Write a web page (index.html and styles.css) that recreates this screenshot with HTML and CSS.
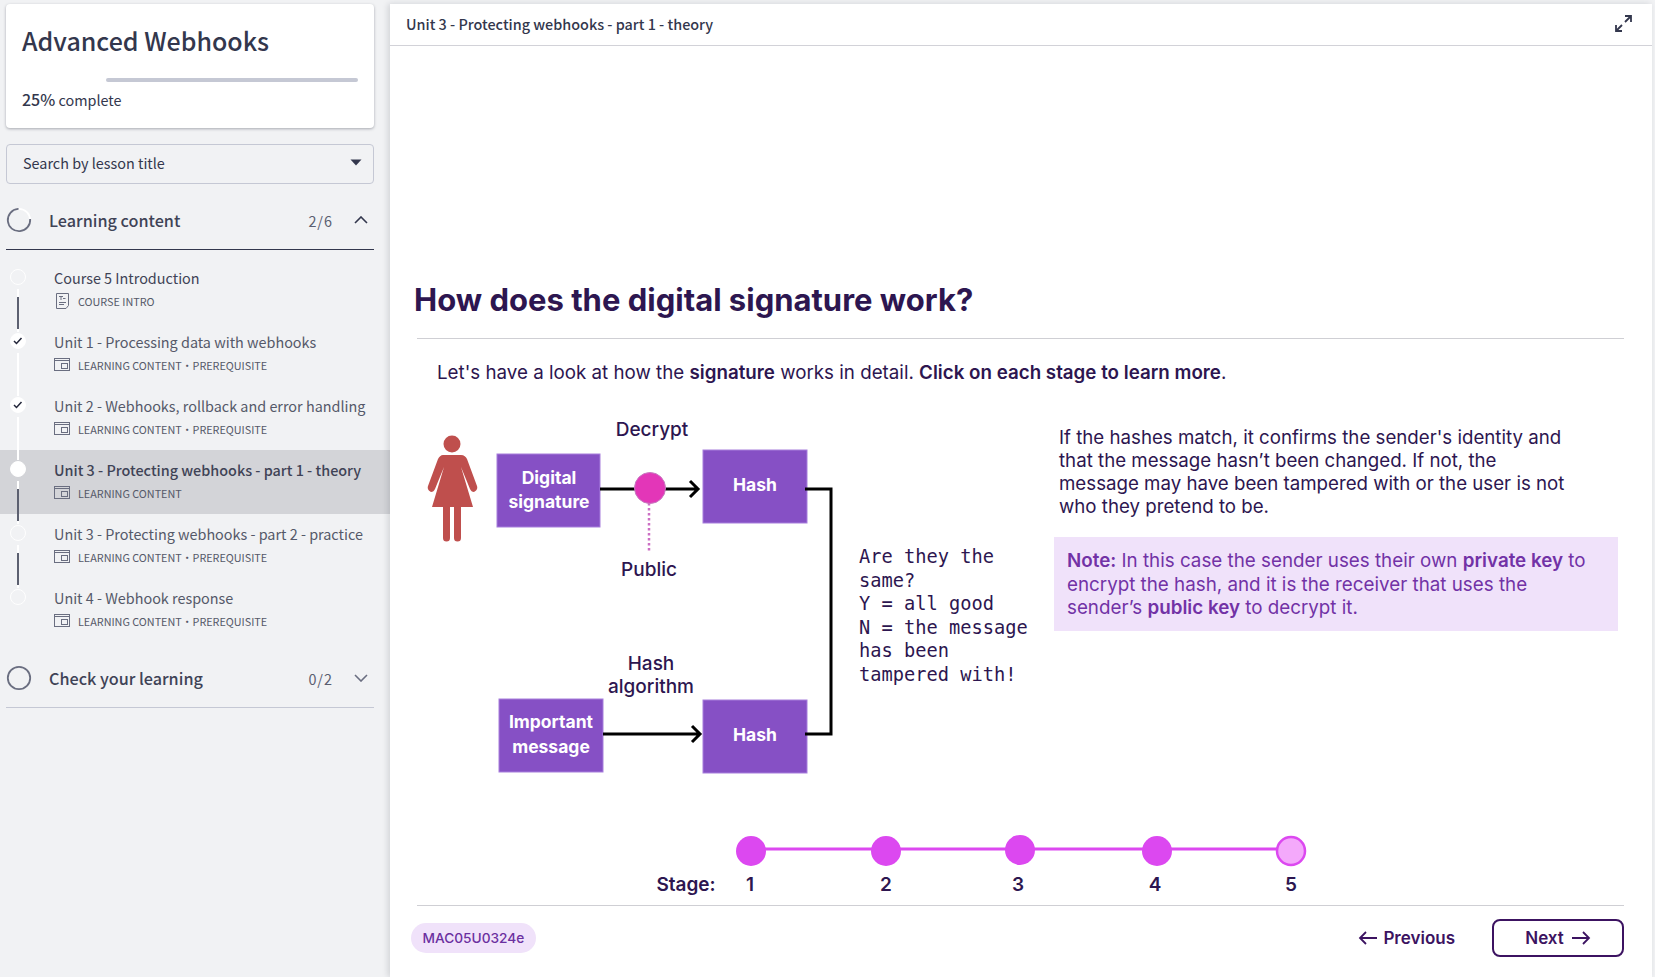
FILE: index.html
```html
<!DOCTYPE html>
<html lang="en">

<head>
    <meta charset="UTF-8">
    <title>Advanced Webhooks</title>
    <link rel="stylesheet" href="styles.css">
</head>

<body>
    <aside class="sidebar">
        <div class="course-card">
            <h1 class="course-title">Advanced Webhooks</h1>
            <div class="progress"><div class="progress-done"></div><div class="progress-left"></div></div>
            <p class="progress-text"><b>25%</b> complete</p>
        </div>

        <div class="search">
            <span>Search by lesson title</span>
            <svg width="12" height="7" viewBox="0 0 12 7"><path d="M0.5 0.5h11L6 6.5z" fill="#33374d"/></svg>
        </div>

        <div class="section section-open">
            <svg class="section-ring" width="26" height="26" viewBox="0 0 26 26">
                <circle cx="13" cy="13" r="11.2" fill="none" stroke="#fff" stroke-width="1.8"/>
                <circle cx="13" cy="13" r="11.2" fill="none" stroke="#6a6e80" stroke-width="1.8" stroke-dasharray="53 18" transform="rotate(-5 13 13)"/>
            </svg>
            <span class="section-title">Learning content</span>
            <span class="section-count">2/6</span>
            <svg class="chevron" width="14" height="8" viewBox="0 0 14 8"><path d="M1 7l6-6 6 6" fill="none" stroke="#33374d" stroke-width="1.6"/></svg>
        </div>

        <ul class="lessons">
            <li class="lesson">
                <div class="marker"><span class="dot"></span><span class="rail rail-todo"></span></div>
                <div class="lesson-body">
                    <div class="lesson-title lesson-title-dark">Course 5 Introduction</div>
                    <div class="lesson-meta">
                        <svg class="meta-icon" width="16" height="16" viewBox="0 0 16 16" fill="none" stroke="#6a6e80"><path d="M2.5 0.5h12v12l-2.500 3h-9.500z"/><path d="M5 3.500h4M7 3.500v3.500M9 5.500h2.500M5 9.500h7M5 11.500h5"/></svg>
                        <span>COURSE INTRO</span>
                    </div>
                </div>
            </li>
            <li class="lesson">
                <div class="marker">
                    <span class="dot"><svg width="10" height="8" viewBox="0 0 10 8"><path d="M1 4l2.500 2.500L8.500 1" fill="none" stroke="#23263a" stroke-width="1.500"/></svg></span>
                    <span class="rail"></span>
                </div>
                <div class="lesson-body">
                    <div class="lesson-title">Unit 1 - Processing data with webhooks</div>
                    <div class="lesson-meta">
                        <svg class="meta-icon" width="16" height="14" viewBox="0 0 16 14" fill="none" stroke="#6a6e80"><rect x="0.500" y="0.500" width="15" height="12"/><path d="M0.500 2.500h15"/><rect x="7.500" y="5.500" width="6" height="5"/></svg>
                        <span>LEARNING CONTENT</span><span class="meta-sep">·</span><span>PREREQUISITE</span>
                    </div>
                </div>
            </li>
            <li class="lesson">
                <div class="marker">
                    <span class="dot"><svg width="10" height="8" viewBox="0 0 10 8"><path d="M1 4l2.500 2.500L8.500 1" fill="none" stroke="#23263a" stroke-width="1.500"/></svg></span>
                    <span class="rail"></span>
                </div>
                <div class="lesson-body">
                    <div class="lesson-title">Unit 2 - Webhooks, rollback and error handling</div>
                    <div class="lesson-meta">
                        <svg class="meta-icon" width="16" height="14" viewBox="0 0 16 14" fill="none" stroke="#6a6e80"><rect x="0.500" y="0.500" width="15" height="12"/><path d="M0.500 2.500h15"/><rect x="7.500" y="5.500" width="6" height="5"/></svg>
                        <span>LEARNING CONTENT</span><span class="meta-sep">·</span><span>PREREQUISITE</span>
                    </div>
                </div>
            </li>
            <li class="lesson lesson-current">
                <div class="marker"><span class="dot"></span><span class="rail rail-todo"></span></div>
                <div class="lesson-body">
                    <div class="lesson-title">Unit 3 - Protecting webhooks - part 1 - theory</div>
                    <div class="lesson-meta">
                        <svg class="meta-icon" width="16" height="14" viewBox="0 0 16 14" fill="none" stroke="#6a6e80"><rect x="0.500" y="0.500" width="15" height="12"/><path d="M0.500 2.500h15"/><rect x="7.500" y="5.500" width="6" height="5"/></svg>
                        <span>LEARNING CONTENT</span>
                    </div>
                </div>
            </li>
            <li class="lesson">
                <div class="marker"><span class="dot"></span><span class="rail rail-todo"></span></div>
                <div class="lesson-body">
                    <div class="lesson-title">Unit 3 - Protecting webhooks - part 2 - practice</div>
                    <div class="lesson-meta">
                        <svg class="meta-icon" width="16" height="14" viewBox="0 0 16 14" fill="none" stroke="#6a6e80"><rect x="0.500" y="0.500" width="15" height="12"/><path d="M0.500 2.500h15"/><rect x="7.500" y="5.500" width="6" height="5"/></svg>
                        <span>LEARNING CONTENT</span><span class="meta-sep">·</span><span>PREREQUISITE</span>
                    </div>
                </div>
            </li>
            <li class="lesson">
                <div class="marker"><span class="dot"></span></div>
                <div class="lesson-body">
                    <div class="lesson-title">Unit 4 - Webhook response</div>
                    <div class="lesson-meta">
                        <svg class="meta-icon" width="16" height="14" viewBox="0 0 16 14" fill="none" stroke="#6a6e80"><rect x="0.500" y="0.500" width="15" height="12"/><path d="M0.500 2.500h15"/><rect x="7.500" y="5.500" width="6" height="5"/></svg>
                        <span>LEARNING CONTENT</span><span class="meta-sep">·</span><span>PREREQUISITE</span>
                    </div>
                </div>
            </li>
        </ul>

        <div class="section section-closed">
            <svg class="section-ring" width="26" height="26" viewBox="0 0 26 26"><circle cx="13" cy="13" r="11.200" fill="none" stroke="#6a6e80" stroke-width="1.800"/></svg>
            <span class="section-title">Check your learning</span>
            <span class="section-count">0/2</span>
            <svg class="chevron" width="14" height="8" viewBox="0 0 14 8"><path d="M1 1l6 6 6-6" fill="none" stroke="#6a6e80" stroke-width="1.600"/></svg>
        </div>
    </aside>

    <main class="main">
        <header class="main-header">
            <span>Unit 3 - Protecting webhooks - part 1 - theory</span>
            <svg width="17" height="17" viewBox="0 0 17 17" fill="none" stroke="#33374d" stroke-width="1.800"><path d="M10 1h6v6M16 1l-6 6M7 16H1v-6M1 16l6-6"/></svg>
        </header>

        <section class="slide">
            <h2 class="slide-title">How does the digital signature work?</h2>
            <p class="slide-intro">Let's have a look at how the <b>signature</b> works in detail. <b>Click on each stage to learn more</b>.</p>

            <div class="figure">
                <svg class="diagram" width="430" height="390" viewBox="417 400 430 390">
                    <circle cx="452" cy="444" r="8.500" fill="#bf4f4d"/>
                    <path d="M443 455h18c3 0 5 2 6 4l10 27c1 3-1 5-3 6-2 0-3-1-4-3l-9-22 12 40h-41l12-40-9 22c-1 2-2 3-4 3-2-1-4-3-3-6l10-27c1-2 3-4 5-4z" fill="#bf4f4d"/>
                    <path d="M443 506h7v32a3.500 3.500 0 0 1-7 0zM454 506h7v32a3.500 3.500 0 0 1-7 0z" fill="#bf4f4d"/>

                    <rect class="box" x="497" y="454" width="103" height="73"/>
                    <text class="box-text" x="549" y="484">Digital</text>
                    <text class="box-text" x="549" y="508">signature</text>
                    <rect class="box" x="703" y="450" width="104" height="73"/>
                    <text class="box-text" x="755" y="491">Hash</text>
                    <text class="label" x="652" y="436">Decrypt</text>
                    <path class="wire" d="M600 489H698M690 481l8 8-8 8"/>
                    <path d="M649 503V552" stroke="#cc6fc4" stroke-width="2.500" stroke-dasharray="2.500 2.500"/>
                    <circle cx="650" cy="488" r="15.500" fill="#e336b8" stroke="#c77ac0"/>
                    <text class="label" x="649" y="576">Public</text>

                    <text class="label" x="651" y="670">Hash</text>
                    <text class="label" x="651" y="693">algorithm</text>
                    <rect class="box" x="499" y="699" width="104" height="73"/>
                    <text class="box-text" x="551" y="728">Important</text>
                    <text class="box-text" x="551" y="753">message</text>
                    <rect class="box" x="703" y="700" width="104" height="73"/>
                    <text class="box-text" x="755" y="741">Hash</text>
                    <path class="wire" d="M603 734H700M692 726l8 8-8 8"/>
                    <path class="wire" d="M805 489H831V734H805"/>
                </svg>

                <div class="figure-question">Are they the same?<br>Y = all good<br>N = the message has been tampered with!</div>

                <div class="figure-side">
                    <p class="figure-text">If the hashes match, it confirms the sender's identity and that the message hasn’t been changed. If not, the message may have been tampered with or the user is not who they pretend to be.</p>
                    <div class="note"><b>Note:</b> In this case the sender uses their own <b>private key</b> to encrypt the hash, and it is the receiver that uses the sender’s <b>public key</b> to decrypt it.</div>
                </div>
            </div>

            <svg class="stages" width="700" height="70" viewBox="640 830 700 70">
                <path d="M751 849H1291" stroke="#dc48f0" stroke-width="3"/>
                <circle class="stage" cx="751" cy="851" r="15"/>
                <circle class="stage" cx="886" cy="851" r="15"/>
                <circle class="stage" cx="1020" cy="850" r="15"/>
                <circle class="stage" cx="1157" cy="851" r="15"/>
                <circle class="stage stage-current" cx="1291" cy="851" r="14"/>
                <text class="stage-label" x="686" y="891">Stage:</text>
                <text class="stage-label" x="750" y="891">1</text>
                <text class="stage-label" x="886" y="891">2</text>
                <text class="stage-label" x="1018" y="891">3</text>
                <text class="stage-label" x="1155" y="891">4</text>
                <text class="stage-label" x="1291" y="891">5</text>
            </svg>
        </section>

        <footer class="main-footer">
            <span class="tag">MAC05U0324e</span>
            <div class="nav">
                <a class="nav-prev">
                    <svg width="20" height="14" viewBox="0 0 20 14" fill="none" stroke="#3c1361" stroke-width="1.800"><path d="M19 7H2M8 1L2 7l6 6"/></svg>
                    Previous
                </a>
                <a class="nav-next">
                    Next
                    <svg width="20" height="14" viewBox="0 0 20 14" fill="none" stroke="#3c1361" stroke-width="1.800"><path d="M1 7h17M12 1l6 6-6 6"/></svg>
                </a>
            </div>
        </footer>
    </main>
</body>

</html>
```

FILE: styles.css
```css
* {
    box-sizing: border-box;
}

html,
body {
    margin: 0;
    height: 100%;
}

body {
    display: flex;
    overflow: hidden;
    font-family: "Noto Sans CJK SC", "Noto Sans", sans-serif;
    background-color: #f1f2f4;
    color: #33374d;
}

/* sidebar */

.sidebar {
    flex: 0 0 390px;
    padding-top: 4px;
}

.course-card {
    width: 368px;
    height: 124px;
    margin-left: 6px;
    padding: 19px 16px 0;
    background: #ffffff;
    border-radius: 4px;
    box-shadow: 0 1px 3px rgba(30, 32, 50, 0.35);
}

.course-title {
    margin: 0;
    font-size: 25px;
    line-height: 34px;
    font-weight: 500;
}

.progress {
    display: flex;
    height: 4px;
    margin-top: 21px;
}

.progress-done {
    width: 84px;
}

.progress-left {
    flex: 1;
    background: #c5c8d4;
    border-radius: 2px;
}

.progress-text {
    margin: 7px 0 0;
    font-size: 14.400px;
    line-height: 20px;
}

.progress-text b {
    font-size: 16px;
    font-weight: 500;
}

.search {
    display: flex;
    align-items: center;
    justify-content: space-between;
    width: 368px;
    height: 40px;
    margin: 16px 0 0 6px;
    padding: 0 11px 3px 16px;
    border: 1px solid #c5c8d4;
    border-radius: 4px;
    font-size: 14.400px;
}

.section {
    display: flex;
    align-items: center;
    width: 368px;
    margin-left: 6px;
}

.section-open {
    height: 66px;
    padding-top: 7px;
    border-bottom: 1px solid #33374d;
}

.section-closed {
    height: 63px;
    margin-top: 3px;
    padding-top: 4px;
    border-bottom: 1px solid #c5c8d4;
}

.section-title {
    flex: 1;
    margin-left: 17px;
    font-size: 16.200px;
    font-weight: 500;
    color: #3f4356;
}

.section-count {
    margin-right: 21px;
    font-size: 14.400px;
    letter-spacing: 1px;
    color: #5a5e70;
}

.chevron {
    margin-right: 6px;
}

.lessons {
    margin: 8px 0 0;
    padding: 0;
    list-style: none;
}

.lesson {
    display: flex;
    height: 64px;
    padding-top: 11px;
}

.lesson-current {
    background: #d3d4d8;
}

.marker {
    display: flex;
    flex-direction: column;
    align-items: center;
    flex: 0 0 18px;
    margin: 0 27px 0 9px;
}

.dot {
    display: flex;
    align-items: center;
    justify-content: center;
    flex: 0 0 16px;
    width: 16px;
    border-radius: 50%;
    border: 1px solid #ffffff;
}

.lesson:nth-child(2) .dot,
.lesson:nth-child(3) .dot,
.lesson-current .dot {
    background: #ffffff;
}

.rail {
    flex: 0 0 43px;
    width: 2px;
    margin-top: 4px;
    background: #ffffff;
}

.rail-todo {
    background: linear-gradient(#ffffff 8px, #5c6070 8px, #5c6070 40px, #ffffff 40px);
}

.lesson-body {
    margin-top: -1px;
}

.lesson-title {
    font-size: 14.400px;
    line-height: 20px;
    color: #555969;
}

.lesson-title-dark {
    color: #3f4356;
}

.lesson-current .lesson-title {
    font-weight: 500;
    color: #3f4356;
}

.lesson-meta {
    display: flex;
    align-items: center;
    height: 16px;
    margin-top: 5px;
    font-size: 10.800px;
    color: #555969;
}

.meta-icon {
    margin-right: 8px;
}

.meta-sep {
    margin: 0;
}

/* main panel */

.main {
    flex: 1;
    display: flex;
    flex-direction: column;
    margin: 4px 3px 0 0;
    background: #ffffff;
    box-shadow: -2px 0 6px rgba(30, 32, 50, 0.15);
}

.main-header {
    display: flex;
    align-items: center;
    justify-content: space-between;
    flex: 0 0 42px;
    padding: 0 20px 2px 16px;
    border-bottom: 1px solid #d2d2d8;
    font-size: 14.400px;
    font-weight: 500;
}

.slide {
    flex: 1;
    padding: 234px 28px 0 24px;
}

.slide-title {
    margin: 0 0 0 3px;
    padding: 0 0 18px 0;
    border-bottom: 1px solid #cfcfd4;
    text-indent: -3px;
    font-family: "Inter", sans-serif;
    font-size: 31px;
    line-height: 40px;
    font-weight: 700;
    color: #2d1650;
}

.slide-intro {
    margin: 22px 0 0 23px;
    font-family: "Inter", sans-serif;
    font-size: 18.750px;
    line-height: 24px;
    color: #2d1650;
}

.slide-intro b {
    font-weight: 600;
}

.figure {
    display: flex;
    height: 390px;
    margin-top: 15px;
    margin-left: 3px;
}

.diagram {
    flex: none;
}

.box {
    fill: #8650c5;
    stroke: #a77fdc;
    stroke-width: 1;
}

.box-text {
    font-family: "Inter", sans-serif;
    font-size: 17.500px;
    font-weight: 700;
    fill: #ffffff;
    text-anchor: middle;
}

.label {
    font-family: "Inter", sans-serif;
    font-size: 19px;
    font-weight: 500;
    fill: #2d1650;
    text-anchor: middle;
}

.wire {
    fill: none;
    stroke: #000000;
    stroke-width: 3;
}

.figure-question {
    flex: 0 0 180px;
    margin: 145px 0 0 12px;
    font-family: "DejaVu Sans Mono", monospace;
    font-size: 18.700px;
    line-height: 23.600px;
    color: #2d1650;
}

.figure-side {
    flex: 0 0 564px;
    margin: 26px 0 0 15px;
}

.figure-text {
    width: 520px;
    margin: 0 0 0 5px;
    font-family: "Inter", sans-serif;
    font-size: 18.700px;
    line-height: 23px;
    color: #2d1650;
}

.note {
    height: 94px;
    margin-top: 19px;
    padding: 12px 26px 0 13px;
    background: #f0e2fa;
    font-family: "Inter", sans-serif;
    font-size: 18.800px;
    line-height: 23.500px;
    color: #7232a6;
}

.note b {
    font-weight: 600;
}

.stages {
    display: block;
    margin: 40px 0 0 226px;
}

.stage {
    fill: #dc48f0;
}

.stage-current {
    fill: #f4a9fb;
    stroke: #dc48f0;
    stroke-width: 2.500;
}

.stage-label {
    font-family: "Inter", sans-serif;
    font-size: 19px;
    font-weight: 600;
    fill: #2d1650;
    text-anchor: middle;
}

.main-footer {
    display: flex;
    align-items: center;
    justify-content: space-between;
    flex: 0 0 72px;
    margin: 0 28px 0 27px;
    padding-bottom: 8px;
    border-top: 1px solid #cfcfd4;
}

.tag {
    margin-left: -6px;
    padding: 5px 11.500px;
    background: #f0e2fa;
    border-radius: 15px;
    font-family: "Inter", sans-serif;
    font-size: 13.700px;
    line-height: 20px;
    font-weight: 500;
    color: #6b2fa0;
}

.nav {
    display: flex;
    align-items: center;
    gap: 37px;
}

.nav-prev,
.nav-next {
    display: flex;
    align-items: center;
    gap: 5px;
    font-family: "Inter", sans-serif;
    font-size: 17px;
    font-weight: 600;
    color: #3c1361;
}

.nav-next {
    justify-content: center;
    gap: 7px;
    width: 132px;
    height: 38px;
    border: 2px solid #3c1361;
    border-radius: 8px;
}
```
